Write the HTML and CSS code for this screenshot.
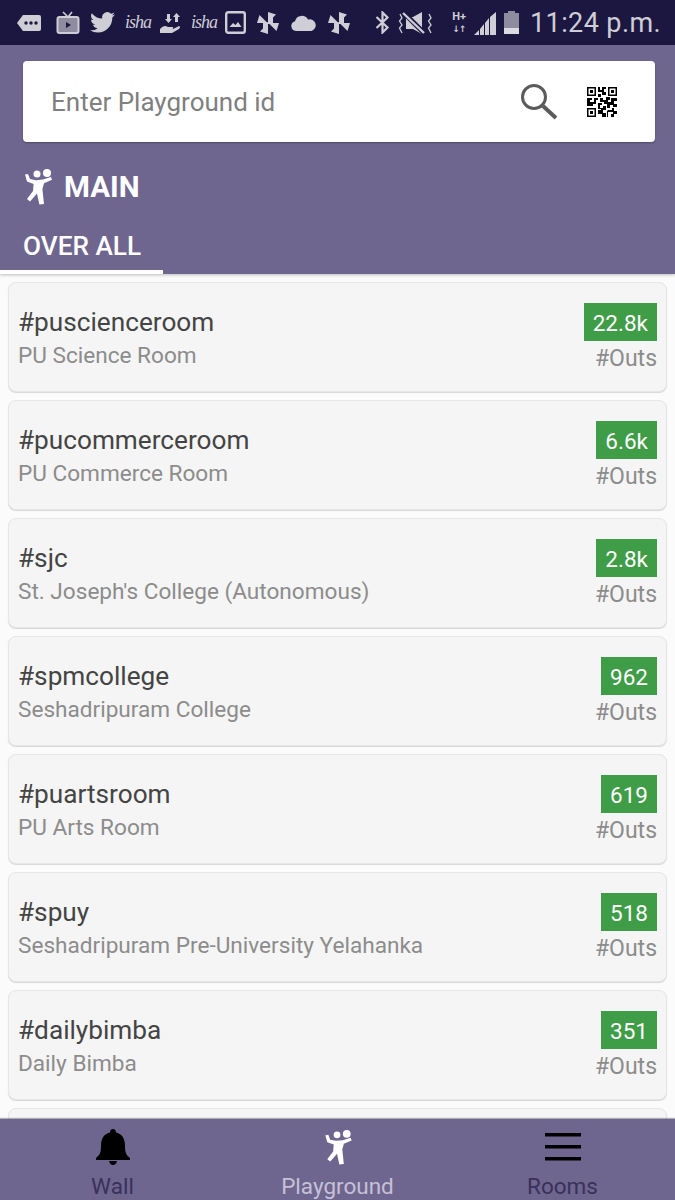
FILE: index.html
```html
<!DOCTYPE html>
<html lang="en">
<head>
  <meta charset="UTF-8">
  <meta name="viewport" content="width=device-width, initial-scale=1.0">
  <title>Playground</title>
  <link rel="stylesheet" href="styles.css">
</head>
<body>
  <svg class="defs" width="0" height="0">
    <symbol id="player" viewBox="0 0 28 37">
      <circle cx="13" cy="6" r="3.5"/>
      <circle cx="23" cy="5" r="4"/>
      <path d="M1 6.5 L4 6 L6 11 L12 12.2 L19 11.6 L27 9 L28 11.8 L20 15.2 L18.4 21 L20 36 L15.4 36.6 L13 25.5 L6 33.5 L3 31 L9 23 L9.6 16 L3 13.6 Z"/>
    </symbol>
    <symbol id="pinwheel" viewBox="0 0 24 24">
      <path d="M12 11.5 L12 1 L20 3.5 Z M12.5 12 L23 12 L20.5 20 Z M12 12.5 L12 23 L4 20.5 Z M11.5 12 L1 12 L3.5 4 Z M12 11 L12 6 L17 6.5 L17 12 L12 13 L12 18 L7 17.5 L7 12 Z"/>
    </symbol>
  </svg>

  <div class="status-bar">
    <div class="status-icons">
      <svg class="st st-first" width="26" height="20" viewBox="0 0 26 20"><path d="M7 2 H23 Q25 2 25 4 V16 Q25 18 23 18 H7 L1 10 Z" fill="#cfcdd6"/><circle cx="10" cy="10" r="1.7" fill="#1c1740"/><circle cx="15" cy="10" r="1.7" fill="#1c1740"/><circle cx="20" cy="10" r="1.7" fill="#1c1740"/></svg>
      <svg class="st" width="24" height="24" viewBox="0 0 24 24"><path d="M7 1 L12 6 L16 1" fill="none" stroke="#cfcdd6" stroke-width="1.6"/><rect x="1.5" y="6" width="21" height="16" rx="2" fill="#8f8ca0" stroke="#cfcdd6" stroke-width="2"/><path d="M10 11 L15 14 L10 17 Z" fill="#1c1740"/></svg>
      <svg class="st" width="25" height="21" viewBox="0 0 24 20"><path d="M24 2.4 a9.6 9.6 0 0 1-2.8.8 4.9 4.9 0 0 0 2.1-2.7 9.7 9.7 0 0 1-3.1 1.2 4.9 4.9 0 0 0-8.4 4.5 A14 14 0 0 1 1.7 1 a4.9 4.9 0 0 0 1.5 6.6 4.9 4.9 0 0 1-2.2-.6 4.9 4.9 0 0 0 3.9 4.9 5 5 0 0 1-2.2.1 4.9 4.9 0 0 0 4.6 3.4 A9.9 9.9 0 0 1 0 17.4 a13.9 13.9 0 0 0 7.5 2.2 c9.1 0 14.2-7.7 13.9-14.5 A9.9 9.9 0 0 0 24 2.4 Z" fill="#cfcdd6"/></svg>
      <span class="isha">isha</span>
      <svg class="st" width="22" height="22" viewBox="0 0 22 22"><path d="M1 17 Q5 12 9 15 H14 Q15 17 12 17 H9 H14 L20 14 Q22 15 20 17 L13 21 H6 L1 21 Z" fill="#cfcdd6"/><path d="M8 2 H11 V7 H13 L9.5 11 L6 7 H8 Z M16 10 V5 H14 L17.5 1 L21 5 H19 V10 Z" fill="#cfcdd6"/></svg>
      <span class="isha">isha</span>
      <svg class="st" width="21" height="23" viewBox="0 0 21 23"><rect x="1.2" y="1.2" width="18.6" height="20.6" rx="2" fill="#1c1740" stroke="#cfcdd6" stroke-width="2.4"/><path d="M4.5 16 L8 12 L10.5 14 L13 11 L16.5 16 Z" fill="#cfcdd6"/></svg>
      <svg class="st fill" width="24" height="24"><use href="#pinwheel"/></svg>
      <svg class="st" width="27" height="18" viewBox="0 0 27 18"><path d="M6 17 A5 5 0 0 1 5 7.2 A7 7 0 0 1 18 5.6 A5.8 5.8 0 0 1 21.5 17 Z" fill="#cfcdd6"/></svg>
      <svg class="st fill" width="24" height="24"><use href="#pinwheel"/></svg>
    </div>
    <div class="status-right">
      <svg class="st" width="15" height="23" viewBox="0 0 15 23"><path d="M1.5 6 L12.5 16.5 L7.5 21.5 V1.5 L12.5 6.5 L1.5 17" fill="none" stroke="#cfcdd6" stroke-width="2.2"/></svg>
      <svg class="st st-mute" width="34" height="24" viewBox="0 0 34 24"><path d="M8 6 H15 L24 1 V23 L15 18 H8 Z" fill="#cfcdd6"/><path d="M6 2 L27 23" stroke="#1c1740" stroke-width="5"/><path d="M5 2 L26 22" stroke="#cfcdd6" stroke-width="2.4"/><path d="M2 3 L4 7 L1.5 10 L4 14 L1.5 17 L4 22 M31 3 L33 7 L30.5 10 L33 14 L30.5 17 L33 22" fill="none" stroke="#cfcdd6" stroke-width="1.3"/></svg>
      <div class="net"><span>H+</span><span class="net-arrows">↓↑</span></div>
      <svg class="st" width="22" height="24" viewBox="0 0 22 24"><path d="M0 24 L5 19 V24 Z M6 24 V18 L10 13 V24 Z M11 24 V12 L15 7 V24 Z M16 24 V6 L22 1 V24 Z" fill="#cfcdd6"/></svg>
      <div class="battery"><div class="battery-fill"></div></div>
      <span class="clock">11:24 p.m.</span>
    </div>
  </div>

  <header class="top">
    <div class="search">
      <span class="search-text">Enter Playground id</span>
      <svg class="search-icon" width="40" height="40" viewBox="0 0 40 40"><circle cx="15" cy="15" r="11.5" fill="none" stroke="#5b5b5b" stroke-width="3"/><path d="M24 24 L37 36" stroke="#5b5b5b" stroke-width="4"/></svg>
      <svg class="qr" width="30" height="30" viewBox="0 0 30 30">
        <path d="M0 0 H9 V9 H0 Z M1.5 1.5 V7.5 H7.5 V1.5 Z M3 3 H6 V6 H3 Z M21 0 H30 V9 H21 Z M22.5 1.5 V7.5 H28.5 V1.5 Z M24 3 H27 V6 H24 Z M0 21 H9 V30 H0 Z M1.5 22.5 V28.5 H7.5 V22.5 Z M3 24 H6 V27 H3 Z"/>
        <path d="M11 0 H13 V3 H15 V0 H19 V2 H17 V5 H19 V8 H15 V5 H11 Z M11 7 H14 V10 H11 Z M0 11 H5 V13 H3 V15 H7 V11 H11 V13 H9 V17 H6 V19 H0 Z M13 11 H16 V13 H19 V10 H23 V13 H21 V15 H24 V11 H30 V14 H27 V17 H30 V20 H26 V18 H23 V21 H20 V17 H17 V15 H13 Z M11 16 H15 V18 H13 V21 H16 V19 H19 V23 H16 V26 H19 V30 H15 V27 H11 V23 H14 V22 H11 Z M21 23 H25 V21 H27 V24 H30 V27 H27 V30 H24 V27 H26 V25 H21 V30 H20 V24 Z"/>
      </svg>
    </div>
    <div class="title">
      <svg class="title-icon" width="28" height="37"><use href="#player"/></svg>
      <span>MAIN</span>
    </div>
    <div class="tab">OVER ALL</div>
  </header>

  <main class="list">
    <article class="card">
      <div class="card-text"><div class="room-id">#puscienceroom</div><div class="room-name">PU Science Room</div></div>
      <div class="card-count"><span class="badge">22.8k</span><span class="outs">#Outs</span></div>
    </article>
    <article class="card">
      <div class="card-text"><div class="room-id">#pucommerceroom</div><div class="room-name">PU Commerce Room</div></div>
      <div class="card-count"><span class="badge">6.6k</span><span class="outs">#Outs</span></div>
    </article>
    <article class="card">
      <div class="card-text"><div class="room-id">#sjc</div><div class="room-name">St. Joseph's College (Autonomous)</div></div>
      <div class="card-count"><span class="badge">2.8k</span><span class="outs">#Outs</span></div>
    </article>
    <article class="card">
      <div class="card-text"><div class="room-id">#spmcollege</div><div class="room-name">Seshadripuram College</div></div>
      <div class="card-count"><span class="badge">962</span><span class="outs">#Outs</span></div>
    </article>
    <article class="card">
      <div class="card-text"><div class="room-id">#puartsroom</div><div class="room-name">PU Arts Room</div></div>
      <div class="card-count"><span class="badge">619</span><span class="outs">#Outs</span></div>
    </article>
    <article class="card">
      <div class="card-text"><div class="room-id">#spuy</div><div class="room-name">Seshadripuram Pre-University Yelahanka</div></div>
      <div class="card-count"><span class="badge">518</span><span class="outs">#Outs</span></div>
    </article>
    <article class="card">
      <div class="card-text"><div class="room-id">#dailybimba</div><div class="room-name">Daily Bimba</div></div>
      <div class="card-count"><span class="badge">351</span><span class="outs">#Outs</span></div>
    </article>
    <article class="card"></article>
  </main>

  <nav class="bottom-nav">
    <div class="nav-item">
      <svg class="nav-icon" width="34" height="36" viewBox="0 0 34 36"><path d="M17 0 Q20 0 20 3.5 C27 5 29 11 29 17 C29 23 30 26 34 29 V31 H0 V29 C4 26 5 23 5 17 C5 11 7 5 14 3.5 Q14 0 17 0 Z M13 32 H21 Q20 36 17 36 Q14 36 13 32 Z" fill="#000"/></svg>
      <span>Wall</span>
    </div>
    <div class="nav-item active">
      <svg class="nav-icon" width="28" height="36" fill="#fff"><use href="#player"/></svg>
      <span>Playground</span>
    </div>
    <div class="nav-item">
      <svg class="nav-icon" width="36" height="36" viewBox="0 0 36 36"><path d="M0 4 H36 V7.5 H0 Z M0 16 H36 V19.5 H0 Z M0 28 H36 V31.5 H0 Z" fill="#000"/></svg>
      <span>Rooms</span>
    </div>
  </nav>
</body>
</html>
```

FILE: styles.css
```css
html, body {
  margin: 0;
  height: 100%;
}
body {
  width: 675px;
  height: 1200px;
  overflow: hidden;
  display: flex;
  flex-direction: column;
  font-family: Roboto, "Liberation Sans", sans-serif;
  background: #fbfbfc;
}
.defs {
  position: absolute;
}

/* status bar */
.status-bar {
  height: 45px;
  flex: none;
  display: flex;
  align-items: center;
  justify-content: space-between;
  padding: 0 14px 0 16px;
  background: #1c1740;
  color: #cfcdd6;
}
.status-icons, .status-right {
  display: flex;
  align-items: center;
}
.status-icons {
  gap: 10px;
}
.status-right {
  gap: 8px;
}
.st {
  flex: none;
}
.st.fill {
  fill: #cfcdd6;
}
.st-first {
  margin-right: 4px;
}
.st-mute {
  margin-right: 8px;
}
.isha {
  width: 24px;
  font-family: "Liberation Serif", serif;
  font-style: italic;
  font-size: 18px;
  letter-spacing: -1px;
}
.net {
  display: flex;
  flex-direction: column;
  align-items: center;
  margin-left: 4px;
  font-size: 11px;
  font-weight: 700;
  line-height: 12px;
}
.net-arrows {
  font-family: "DejaVu Sans", sans-serif;
  font-size: 9px;
  letter-spacing: -1px;
}
.battery {
  width: 15px;
  height: 21px;
  margin-top: 1px;
  display: flex;
  align-items: flex-end;
  background: #8f8ca0;
  position: relative;
}
.battery::before {
  content: "";
  position: absolute;
  top: -2px;
  left: 4px;
  width: 7px;
  height: 2px;
  background: #8f8ca0;
}
.battery-fill {
  width: 100%;
  height: 6px;
  background: #dcdbe2;
}
.clock {
  font-size: 27px;
  letter-spacing: 0.4px;
  margin-left: 3px;
}

/* header */
.top {
  flex: none;
  height: 229px;
  box-sizing: border-box;
  padding-top: 16px;
  background: #6f6690;
  color: #fff;
  display: flex;
  flex-direction: column;
  box-shadow: 0 1px 3px rgba(0, 0, 0, 0.25);
  position: relative;
}
.search {
  height: 81px;
  margin: 0 20px 0 23px;
  padding: 0 38px 0 28px;
  display: flex;
  align-items: center;
  background: #fff;
  border-radius: 4px;
  box-shadow: 0 1px 2px rgba(0, 0, 0, 0.3);
}
.search-text {
  flex: 1;
  font-size: 26px;
  color: #7f7f7f;
}
.search-icon {
  margin-right: 28px;
}
.title {
  margin: 26px 0 0 24px;
  height: 37px;
  display: flex;
  align-items: center;
  gap: 12px;
  font-size: 29.6px;
  font-weight: 700;
}
.title-icon {
  fill: #fff;
}
.tab {
  margin-top: auto;
  width: 163px;
  height: 45px;
  box-sizing: border-box;
  padding-left: 23px;
  font-size: 26.2px;
  font-weight: 500;
  line-height: 34px;
  border-bottom: 4px solid #fff;
}

/* list */
.list {
  flex: 1;
  min-height: 0;
  overflow: hidden;
  padding: 8px 8px 0;
  display: flex;
  flex-direction: column;
  gap: 8px;
}
.card {
  flex: none;
  height: 110px;
  box-sizing: border-box;
  padding: 0 9px;
  display: flex;
  justify-content: space-between;
  background: #f5f5f5;
  border: 1px solid #e6e6e6;
  border-radius: 8px;
  box-shadow: 0 1px 1px rgba(0, 0, 0, 0.14);
}
.card-text {
  padding-top: 23px;
}
.room-id {
  font-size: 26.2px;
  line-height: 32px;
  color: #444;
}
.room-name {
  margin-top: 3px;
  font-size: 22.6px;
  line-height: 30px;
  color: #8c8c8c;
}
.card-count {
  padding-top: 20px;
  display: flex;
  flex-direction: column;
  align-items: flex-end;
}
.badge {
  height: 38px;
  padding: 0 9px;
  font-size: 22.5px;
  line-height: 41px;
  color: #fff;
  background: #3f9c47;
}
.outs {
  margin-top: 3px;
  font-size: 23px;
  line-height: 30px;
  color: #8c8c8c;
}

/* bottom nav */
.bottom-nav {
  flex: none;
  height: 81px;
  display: grid;
  grid-template-columns: 225px 225px 225px;
  background: #6f6690;
  box-shadow: 0 -1px 1px rgba(0, 0, 0, 0.3);
  position: relative;
}
.nav-item {
  display: flex;
  flex-direction: column;
  align-items: center;
  padding-top: 10px;
  font-size: 22.5px;
  line-height: 28px;
  color: #39315a;
}
.nav-icon {
  height: 36px;
  margin-bottom: 7px;
}
.nav-item.active {
  color: #c5c1d6;
}
```
